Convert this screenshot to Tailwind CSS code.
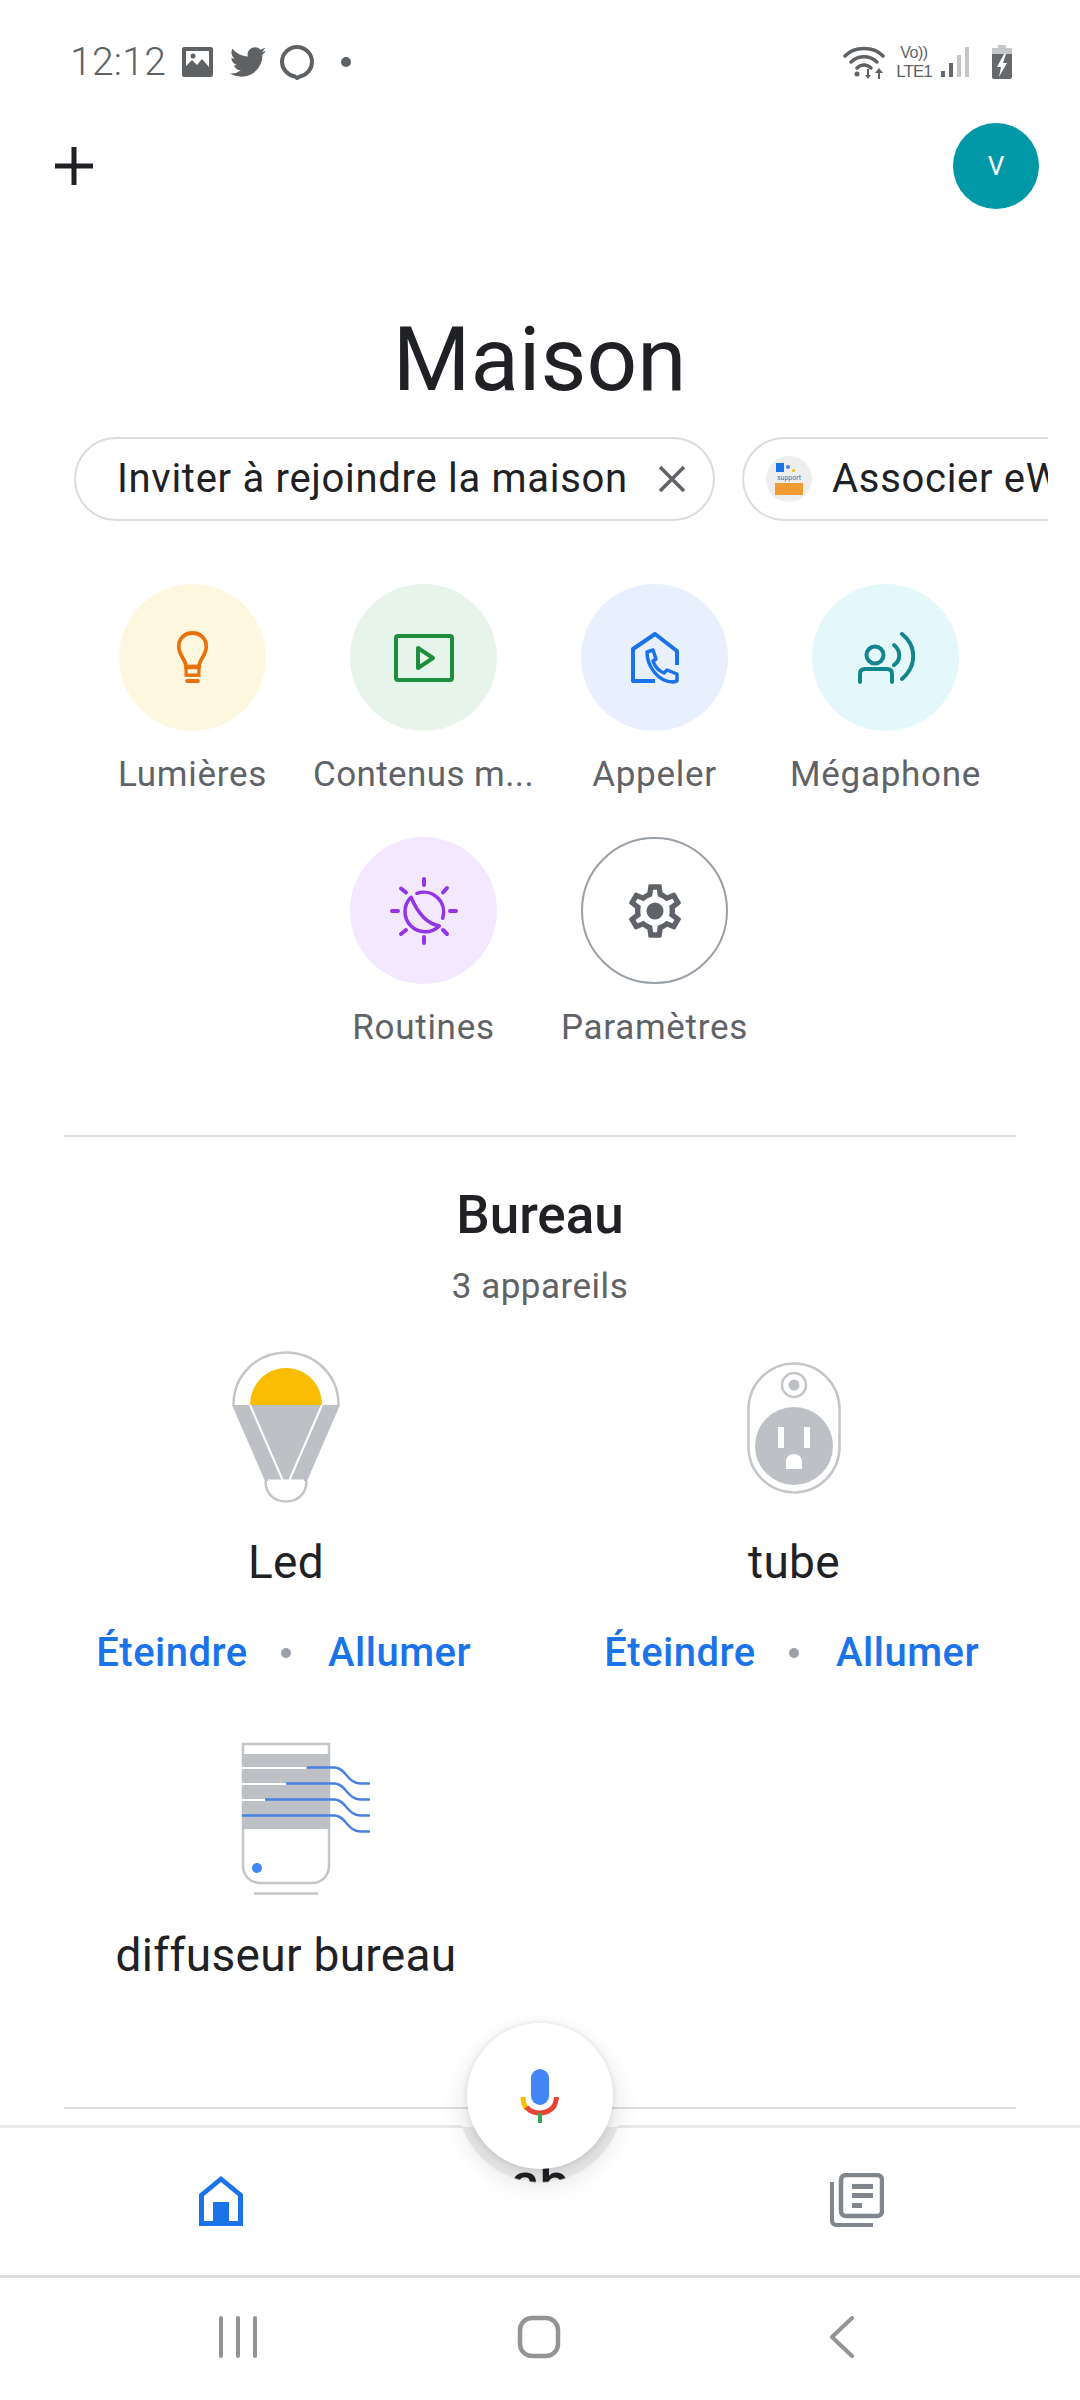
<!DOCTYPE html>
<html lang="fr">
<head>
    <meta charset="UTF-8">
    <meta name="viewport" content="width=device-width, initial-scale=1.0">
    <title>Maison</title>
    <script src="https://cdn.jsdelivr.net/npm/@tailwindcss/browser@4"></script>
</head>
<body class="bg-white font-['Roboto','Noto_Sans',sans-serif]">
<div class="relative w-[1080px] h-[2400px] overflow-hidden bg-white">

    <!-- Status bar -->
    <div class="flex items-center h-[124px] pl-[70px] pr-[68px] text-[#5f6265]">
        <span class="text-[39px] font-light w-[112px] tracking-[0.3px]">12:12</span>
        <svg class="w-[31px] h-[30px]" viewBox="0 0 31 30"><path fill="currentColor" fill-rule="evenodd" d="M2 0h27a2 2 0 0 1 2 2v26a2 2 0 0 1-2 2H2a2 2 0 0 1-2-2V2a2 2 0 0 1 2-2zm2 4v15l6-6 5 5 5-6 7 8V4z"/><circle cx="11" cy="9" r="2.5" fill="currentColor"/></svg>
        <svg class="w-[38px] h-[36px] ml-[16px]" viewBox="1 3 22 19"><path fill="currentColor" d="M22.46 6c-.77.35-1.6.58-2.46.69.88-.53 1.56-1.37 1.88-2.38-.83.5-1.75.85-2.72 1.05C18.37 4.5 17.26 4 16 4c-2.35 0-4.27 1.92-4.27 4.29 0 .34.04.67.11.98C8.28 9.09 5.11 7.38 3 4.79c-.37.63-.58 1.37-.58 2.15 0 1.49.75 2.81 1.91 3.56-.71 0-1.37-.2-1.95-.5v.03c0 2.08 1.48 3.82 3.44 4.21a4.22 4.22 0 0 1-1.93.07 4.28 4.28 0 0 0 4 2.98 8.521 8.521 0 0 1-5.33 1.84c-.34 0-.68-.02-1.02-.06C3.44 20.29 5.7 21 8.12 21 16 21 20.33 14.46 20.33 8.79c0-.19 0-.37-.01-.56.84-.6 1.56-1.36 2.14-2.23z"/></svg>
        <svg class="w-[36px] h-[36px] ml-[12px]" viewBox="0 0 36 36"><path fill="none" stroke="currentColor" stroke-width="4" d="M16 32.500C8.500 31 3 25 3 18 3 9.700 9.700 3 18 3s15 6.700 15 15c0 7-5 13-12 14.500l-3 1.500z"/></svg>
        <span class="w-[10px] h-[10px] rounded-full bg-current ml-[26px]"></span>

        <div class="ml-auto flex items-center">
            <svg class="w-[44px] h-[34px]" viewBox="0 0 44 34">
                <g fill="none" stroke="currentColor" stroke-width="3.500" stroke-linecap="round">
                    <path d="M2 11C11 1 31 1 40 11"/>
                    <path d="M8 17c7-7 19-7 26 0"/>
                    <path d="M14 23c4-4 10-4 14 0"/>
                </g>
                <circle cx="14" cy="29" r="2.500" fill="currentColor"/>
                <path fill="currentColor" d="M24 24h2v6h2l-3 4-3-4h2zM35 34h2v-6h3l-4-5-4 5h3z"/>
            </svg>
            <div class="flex flex-col items-center ml-[7px] w-[40px] leading-none font-['Liberation_Sans',sans-serif] text-[#5f6368]">
                <span class="text-[16px] h-[18px] tracking-[-0.5px]">Vo))</span>
                <span class="text-[17px] tracking-[-1px]">LTE1</span>
            </div>
            <svg class="w-[30px] h-[30px] ml-[6px]" viewBox="0 0 30 30">
                <rect x="1" y="24" width="4" height="6" fill="#66696c"/>
                <rect x="9" y="16" width="4" height="14" fill="#66696c"/>
                <rect x="17" y="8" width="4" height="22" fill="#c4c6c8"/>
                <rect x="25" y="0" width="4" height="30" fill="#c4c6c8"/>
            </svg>
            <svg class="w-[20px] h-[34px] ml-[22px]" viewBox="0 0 20 34">
                <path fill="#c4c6c8" d="M6 0h8v3h6v6H0V3h6z"/>
                <path fill="#66696c" d="M0 9h20v23a2 2 0 0 1-2 2H2a2 2 0 0 1-2-2z"/>
                <path fill="#fff" d="M12 9l-7 13h4l-2 10 8-14h-4l3-9z"/>
            </svg>
        </div>
    </div>

    <!-- Top actions -->
    <div class="flex items-center justify-between h-[84px] pl-[55px] pr-[41px]">
        <svg class="w-[38px] h-[38px]" viewBox="0 0 38 38"><path fill="#202124" d="M16.500 0h5v16.500H38v5H21.500V38h-5V21.500H0v-5h16.500z"/></svg>
        <div class="w-[86px] h-[86px] rounded-full bg-[#0097a7] flex items-center justify-center text-white text-[26px] font-normal">V</div>
    </div>

    <h1 class="text-center text-[89px] leading-[104px] text-[#202124] mt-[100px] ml-[-1px]">Maison</h1>

    <!-- Chips -->
    <div class="flex gap-[27px] mt-[25px] ml-[74px] w-[974px] overflow-hidden">
        <div class="shrink-0 flex items-center w-[641px] h-[84px] rounded-full border-2 border-[#dadce0] pl-[41px]">
            <span class="text-[40px] tracking-[0.7px] text-[#202124] whitespace-nowrap w-[541px]">Inviter à rejoindre la maison</span>
            <svg class="w-[28px] h-[28px]" viewBox="0 0 28 28"><path fill="none" stroke="#5f6368" stroke-width="3.500" d="M2 2l24 24M26 2L2 26"/></svg>
        </div>
        <div class="shrink-0 flex items-center w-[400px] h-[84px] rounded-l-full border-2 border-r-0 border-[#dadce0] pl-[22px]">
            <div class="shrink-0 w-[46px] h-[46px] rounded-full bg-[#eeeeee] flex flex-col items-center justify-center">
                <div class="flex items-start gap-[2px] w-[26px] h-[11px]">
                    <span class="w-[8px] h-[9px] bg-[#1a73e8]"></span>
                    <span class="w-[4px] h-[4px] mt-[2px] rounded-full bg-[#4285f4]"></span>
                    <span class="w-[3px] h-[3px] mt-[6px] rounded-full bg-[#fbbc04]"></span>
                </div>
                <span class="text-[7px] leading-[8px] text-[#3f6fb5]">support</span>
                <span class="w-[28px] h-[12px] mt-[1px] bg-[#ef9a32]"></span>
            </div>
            <span class="text-[40px] tracking-[0.7px] text-[#202124] ml-[20px] whitespace-nowrap">Associer eWeLink</span>
        </div>
    </div>

    <!-- Shortcuts -->
    <div class="flex flex-wrap justify-center mt-[63px] ml-[-2px] px-[78px] text-[#5f6368] text-[35px] tracking-[0.7px] leading-[40px]">
        <div class="w-[231px] flex flex-col items-center">
            <div class="w-[147px] h-[147px] rounded-full bg-[#fef7e0] flex items-center justify-center">
                <svg class="w-[33px] h-[53px]" viewBox="0 0 36 54" preserveAspectRatio="none" fill="none" stroke="#e8710a" stroke-width="4">
                    <path d="M18 2C9 2 3 8 3 16c0 9 8 13 8 21h14c0-8 8-12 8-21C33 8 27 2 18 2z"/>
                    <rect x="11" y="36" width="14" height="9" stroke-width="3.500"/>
                    <path d="M12 51h12" stroke-width="4" stroke-linecap="round"/>
                </svg>
            </div>
            <span class="mt-[24px]">Lumières</span>
        </div>
        <div class="w-[231px] flex flex-col items-center">
            <div class="w-[147px] h-[147px] rounded-full bg-[#e6f4ea] flex items-center justify-center">
                <svg class="w-[60px] h-[48px]" viewBox="0 0 60 48" fill="none" stroke="#1e8e3e" stroke-width="4" stroke-linejoin="round">
                    <rect x="2" y="2" width="56" height="44" rx="2"/>
                    <path d="M24 14v20l15-10z"/>
                </svg>
            </div>
            <span class="mt-[24px] whitespace-nowrap tracking-[0.4px]">Contenus m...</span>
        </div>
        <div class="w-[231px] flex flex-col items-center">
            <div class="w-[147px] h-[147px] rounded-full bg-[#e8f0fe] flex items-center justify-center">
                <svg class="w-[48px] h-[52px]" viewBox="0 0 48 52" fill="none" stroke="#1a73e8" stroke-width="4" stroke-linejoin="round">
                    <path d="M24 49H2V17L24 2l22 17v14"/>
                    <path d="M16 20l6-2 3 9-3 2c2 6 6 10 11 12l3-3 10 4v7l-4 1C27 50 16 34 16 20z" stroke-width="3.500"/>
                </svg>
            </div>
            <span class="mt-[24px]">Appeler</span>
        </div>
        <div class="w-[231px] flex flex-col items-center">
            <div class="w-[147px] h-[147px] rounded-full bg-[#e4f7fb] flex items-center justify-center">
                <svg class="w-[58px] h-[52px]" viewBox="0 0 58 52" fill="none" stroke="#12858f" stroke-width="4" stroke-linecap="round">
                    <circle cx="18" cy="23" r="8.500"/>
                    <path d="M3 50V42c0-3 1.500-5 5-5h22c3.500 0 5 2 5 5v8"/>
                    <path d="M37 13c7 6 7 15 0 20"/>
                    <path d="M45 2c15 12 15 32 0 45"/>
                </svg>
            </div>
            <span class="mt-[24px]">Mégaphone</span>
        </div>
        <div class="w-[231px] flex flex-col items-center mt-[42px]">
            <div class="w-[147px] h-[147px] rounded-full bg-[#f3e8fd] flex items-center justify-center">
                <svg class="w-[68px] h-[68px]" viewBox="0 0 68 68" fill="none" stroke="#9334e6" stroke-width="3.500" stroke-linecap="round" stroke-linejoin="round">
                    <path stroke-width="4" d="M34 2v6M34 60v6M2 34h6M60 34h6M11 11.500l5 4M57 11l-4 4.500M11 57l5-4M57 57l-4-4"/>
                    <path d="M27 16.300A20 20 0 0 1 52.700 41.300"/>
                    <path d="M21 20.300A20 20 0 0 0 49.300 49Q32 46 21 20.300z"/>
                </svg>
            </div>
            <span class="mt-[24px]">Routines</span>
        </div>
        <div class="w-[231px] flex flex-col items-center mt-[42px]">
            <div class="w-[147px] h-[147px] rounded-full border-2 border-[#9aa0a6] flex items-center justify-center">
                <svg class="w-[64px] h-[64px]" viewBox="0 0 24 24">
                    <path fill="#5f6368" d="M19.43 12.98c.04-.32.07-.64.07-.98 0-.34-.03-.66-.07-.98l2.11-1.65c.19-.15.24-.42.12-.64l-2-3.46c-.09-.16-.26-.25-.44-.25-.06 0-.12.01-.17.03l-2.49 1c-.52-.4-1.08-.73-1.69-.98l-.38-2.65C14.46 2.18 14.25 2 14 2h-4c-.25 0-.46.18-.49.42l-.38 2.65c-.61.25-1.17.59-1.69.98l-2.49-1c-.06-.02-.12-.03-.18-.03-.17 0-.34.09-.43.25l-2 3.46c-.13.22-.07.49.12.64l2.11 1.65c-.04.32-.07.65-.07.98 0 .33.03.66.07.98l-2.11 1.65c-.19.15-.24.42-.12.64l2 3.46c.09.16.26.25.44.25.06 0 .12-.01.17-.03l2.49-1c.52.4 1.08.73 1.69.98l.38 2.65c.03.24.24.42.49.42h4c.25 0 .46-.18.49-.42l.38-2.65c.61-.25 1.17-.59 1.69-.98l2.49 1c.06.02.12.03.18.03.17 0 .34-.09.43-.25l2-3.46c.12-.22.07-.49-.12-.64l-2.11-1.65zm-1.98-1.71c.04.31.05.52.05.73 0 .21-.02.43-.05.73l-.14 1.13.89.7 1.08.84-.7 1.21-1.27-.51-1.04-.42-.9.68c-.43.32-.84.56-1.25.73l-1.06.43-.16 1.13-.2 1.35h-1.4l-.19-1.35-.16-1.13-1.06-.43c-.43-.18-.83-.41-1.23-.71l-.91-.7-1.06.43-1.27.51-.7-1.21 1.08-.84.89-.7-.14-1.13c-.03-.31-.05-.54-.05-.74s.02-.43.05-.73l.14-1.13-.89-.7-1.08-.84.7-1.21 1.27.51 1.04.42.9-.68c.43-.32.84-.56 1.25-.73l1.06-.43.16-1.13.2-1.35h1.39l.19 1.35.16 1.13 1.06.43c.43.18.83.41 1.23.71l.91.7 1.06-.43 1.27-.51.7 1.21-1.07.85-.89.7.14 1.13z"/>
                    <circle cx="12" cy="12" r="3.200" fill="#5f6368"/>
                </svg>
            </div>
            <span class="mt-[24px]">Paramètres</span>
        </div>
    </div>

    <div class="h-[2px] bg-[#dadce0] mx-[64px] mt-[87px]"></div>

    <!-- Bureau -->
    <h2 class="text-center text-[53px] font-medium leading-[60px] text-[#202124] mt-[48px]">Bureau</h2>
    <p class="text-center text-[35px] tracking-[0.5px] leading-[40px] text-[#5f6368] mt-[22px]">3 appareils</p>

    <div class="grid grid-cols-2 px-[32px] mt-[44px]">
        <div class="flex flex-col items-center h-[388px]">
            <svg class="w-[108px] h-[152px]" viewBox="0 0 108 152">
                <path fill="none" stroke="#c4c7ca" stroke-width="2.500" d="M1.500 54C1.500 24 25 1.500 54 1.500S106.500 24 106.500 54"/>
                <path fill="#fbbc04" d="M18 54c0-21 16-37 36-37s36 16 36 37z"/>
                <path fill="#bdc1c6" d="M0 54h108L75 130H33z"/>
                <path fill="none" stroke="#fff" stroke-width="2" d="M18 54l33 76M90 54l-33 76"/>
                <path fill="#fff" stroke="#c4c7ca" stroke-width="2.500" d="M33.500 130c0 13 9 20.500 20.500 20.500S74.500 143 74.500 130"/>
                <path stroke="#fff" stroke-width="2" d="M36 129.500h36"/>
            </svg>
            <span class="text-[46px] tracking-[0.3px] leading-[52px] text-[#202124] mt-[33px]">Led</span>
            <div class="flex items-center text-[40px] tracking-[0.5px] leading-[46px] text-[#1a73e8] mt-[42px] ml-[-6px] font-medium">
                <span class="w-[154px] text-center">Éteindre</span>
                <span class="w-[10px] h-[10px] rounded-full bg-[#9aa0a6] ml-[32px] mr-[37px]"></span>
                <span class="w-[143px] text-center">Allumer</span>
            </div>
        </div>
        <div class="flex flex-col items-center h-[388px]">
            <div class="h-[152px] flex items-start">
                <svg class="w-[94px] h-[132px] mt-[11px]" viewBox="0 0 94 132">
                    <rect x="1.500" y="1.500" width="91" height="129" rx="45.500" fill="#fff" stroke="#c4c7ca" stroke-width="2.500"/>
                    <circle cx="47" cy="23" r="12" fill="none" stroke="#c4c7ca" stroke-width="2.500"/>
                    <circle cx="47" cy="23" r="5.500" fill="#bdc1c6"/>
                    <circle cx="47" cy="84" r="39" fill="#bdc1c6"/>
                    <rect x="31" y="65" width="6" height="21" fill="#fff"/>
                    <rect x="57" y="65" width="6" height="21" fill="#fff"/>
                    <path fill="#fff" d="M39 107V99a8 7 0 0 1 16 0v8z"/>
                </svg>
            </div>
            <span class="text-[46px] tracking-[0.3px] leading-[52px] text-[#202124] mt-[33px]">tube</span>
            <div class="flex items-center text-[40px] tracking-[0.5px] leading-[46px] text-[#1a73e8] mt-[42px] ml-[-6px] font-medium">
                <span class="w-[154px] text-center">Éteindre</span>
                <span class="w-[10px] h-[10px] rounded-full bg-[#9aa0a6] ml-[32px] mr-[37px]"></span>
                <span class="w-[143px] text-center">Allumer</span>
            </div>
        </div>
        <div class="flex flex-col items-center">
            <svg class="w-[172px] h-[160px]" viewBox="200 1740 172 160">
                <path fill="#fff" stroke="#c4c7ca" stroke-width="2.500" d="M243 1745h86v122a17 17 0 0 1-17 17h-52a17 17 0 0 1-17-17z"/>
                <path fill="#bdc1c6" d="M242 1755h88v75h-88z"/>
                <path fill="#fff" d="M242 1768h64v2h-64zM242 1784h44v2h-44zM242 1800h24v2h-24z"/>
                <g fill="none" stroke="#4a80e0" stroke-width="2.500">
                    <path d="M307 1768.500h28c10 0 13 16 25 16h10"/>
                    <path d="M286 1784.500h49c10 0 13 16 25 16h10"/>
                    <path d="M265 1800.500h70c10 0 13 16 25 16h10"/>
                    <path d="M242 1816.500h93c10 0 13 16 25 16h10"/>
                </g>
                <circle cx="257" cy="1869" r="5" fill="#4285f4"/>
                <path stroke="#c4c7ca" stroke-width="2.500" d="M254 1894.500h64"/>
            </svg>
            <span class="text-[46px] tracking-[0.3px] leading-[52px] text-[#202124] mt-[30px] whitespace-nowrap">diffuseur bureau</span>
        </div>
    </div>

    <div class="h-[2px] bg-[#dadce0] mx-[64px] mt-[126px]"></div>
    <!-- only the top of this heading shows through the notch -->
    <h2 class="relative z-10 text-center text-[53px] font-medium leading-[60px] text-[#202124] mt-[44px]">ab</h2>

    <!-- Notch shading behind the mic, only shows under the bar line -->
    <div class="absolute z-0 top-[2127px] left-0 w-full h-[70px] overflow-hidden">
        <div class="absolute left-[457px] top-[-110px] w-[166px] h-[166px] rounded-full bg-gradient-to-b from-[#d8d8d8] to-[#f4f4f4]"></div>
    </div>

    <!-- Bottom nav -->
    <div class="absolute z-20 left-0 top-[2125px] w-full h-[275px] bg-white border-t-[3px] border-[#e8eaed] [mask-image:radial-gradient(circle_83px_at_540px_-25px,transparent_98%,black_100%)]">
        <div class="flex h-[147px] relative">
            <svg class="absolute left-[199px] top-[48px] w-[44px] h-[50px]" viewBox="0 0 44 50">
                <path fill="#1a73e8" fill-rule="evenodd" d="M22 0l22 18v32H0V18zm0 6L5 20v25h9V28h16v17h9V20z"/>
                <rect x="14" y="26" width="16" height="24" fill="#1a73e8"/>
            </svg>
            <svg class="absolute left-[830px] top-[45px] w-[54px] h-[54px]" viewBox="0 0 54 54">
                <rect x="11" y="2" width="41" height="41" rx="5" fill="none" stroke="#80868b" stroke-width="4.500"/>
                <path fill="#80868b" d="M0 9h4v38a3 3 0 0 0 3 3h36v4H6a6 6 0 0 1-6-6zM22 11h21v5H22zM22 20h21v5H22zM22 30h10v5H22z"/>
            </svg>
        </div>
        <div class="h-[3px] bg-[#dadce0]"></div>
        <div class="relative flex-1">
            <svg class="absolute left-[218px] top-[38px] w-[40px] h-[42px]" viewBox="0 0 40 42"><path stroke="#949494" stroke-width="4" stroke-linecap="round" d="M3 2v38M20 2v38M37 2v38"/></svg>
            <svg class="absolute left-[517px] top-[37px] w-[44px] h-[44px]" viewBox="0 0 44 44"><rect x="3" y="3" width="38" height="38" rx="12" fill="none" stroke="#949494" stroke-width="4.500"/></svg>
            <svg class="absolute left-[828px] top-[38px] w-[28px] h-[42px]" viewBox="0 0 28 42"><path fill="none" stroke="#949494" stroke-width="4" stroke-linecap="round" stroke-linejoin="round" d="M24 2L4 21l20 19"/></svg>
        </div>
    </div>

    <!-- Mic button -->
    <div class="absolute z-30 left-[467px] top-[2023px] w-[146px] h-[146px] rounded-full bg-white shadow-[0_12px_28px_rgba(0,0,0,0.14),0_0_6px_rgba(0,0,0,0.1)] flex items-center justify-center">
        <svg class="w-[40px] h-[54px]" viewBox="0 0 40 54" fill="none">
            <rect x="11" y="0" width="18" height="36" rx="9" fill="#4285f4"/>
            <path d="M3 28c0 5 1 9 4 12" stroke="#fbbc04" stroke-width="5"/>
            <path d="M6.500 38c3 4 8 6 13.500 6s13-3 15-9c1-3 1.500-5 1.500-7" stroke="#ea4335" stroke-width="5"/>
            <rect x="18" y="44" width="4" height="10" fill="#34a853"/>
        </svg>
    </div>
</div>
</body>
</html>
